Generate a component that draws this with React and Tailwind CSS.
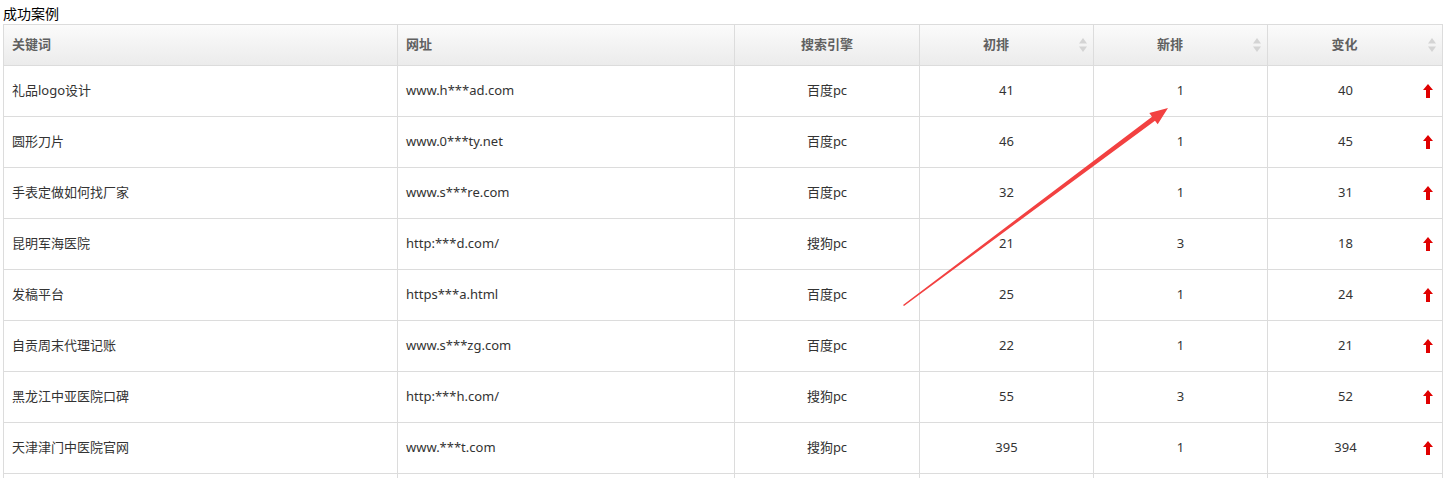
const rows = [
    { kw: "礼品logo设计", url: "www.h***ad.com", engine: "百度pc", first: 41, now: 1, diff: 40 },
    { kw: "圆形刀片", url: "www.0***ty.net", engine: "百度pc", first: 46, now: 1, diff: 45 },
    { kw: "手表定做如何找厂家", url: "www.s***re.com", engine: "百度pc", first: 32, now: 1, diff: 31 },
    { kw: "昆明军海医院", url: "http:***d.com/", engine: "搜狗pc", first: 21, now: 3, diff: 18 },
    { kw: "发稿平台", url: "https***a.html", engine: "百度pc", first: 25, now: 1, diff: 24 },
    { kw: "自贡周末代理记账", url: "www.s***zg.com", engine: "百度pc", first: 22, now: 1, diff: 21 },
    { kw: "黑龙江中亚医院口碑", url: "http:***h.com/", engine: "搜狗pc", first: 55, now: 3, diff: 52 },
    { kw: "天津津门中医院官网", url: "www.***t.com", engine: "搜狗pc", first: 395, now: 1, diff: 394 },
];

const SortIcon = () => (
    <svg width="8" height="14" viewBox="0 0 8 14" className="absolute right-[6px] top-1/2 -translate-y-1/2">
        <path d="M4 0 L8 5.5 L0 5.5 Z" fill="#d4d4d4" />
        <path d="M4 14 L8 8.5 L0 8.5 Z" fill="#d4d4d4" />
    </svg>
);

const UpArrow = () => (
    <svg width="10" height="14" viewBox="0 0 10 14" className="shrink-0">
        <path d="M5 0 L10 6 L7 6 L7 14 L3 14 L3 6 L0 6 Z" fill="#e00000" />
    </svg>
);

const SortHead = ({ label }) => (
    <th className="relative border border-[#dcdcdc] font-semibold text-center pr-[21px]">
        {label}
        <SortIcon />
    </th>
);

export default function App() {
    return (
        <div className="relative bg-white px-[3px] text-[13px] text-[#333]" style={{ fontFamily: '"Noto Sans", "Noto Sans CJK SC", sans-serif' }}>
            <div className="h-[24px] pt-[5px] text-[14px] leading-[18px] text-black">成功案例</div>
            <table className="border-collapse table-fixed w-[1439px]">
                <colgroup>
                    <col className="w-[394px]" />
                    <col className="w-[337px]" />
                    <col className="w-[185px]" />
                    <col className="w-[174px]" />
                    <col className="w-[174px]" />
                    <col className="w-[175px]" />
                </colgroup>
                <thead>
                    <tr className="h-[41px] bg-gradient-to-b from-[#fbfbfb] to-[#ebebeb] text-[#606060]">
                        <th className="border border-[#dcdcdc] font-semibold text-left pl-[8px]">关键词</th>
                        <th className="border border-[#dcdcdc] font-semibold text-left pl-[8px]">网址</th>
                        <th className="border border-[#dcdcdc] font-semibold text-center">搜索引擎</th>
                        <SortHead label="初排" />
                        <SortHead label="新排" />
                        <SortHead label="变化" />
                    </tr>
                </thead>
                <tbody>
                    {rows.map((r) => (
                        <tr key={r.kw} className="h-[51px]">
                            <td className="border border-[#dcdcdc] pl-[8px]">{r.kw}</td>
                            <td className="border border-[#dcdcdc] pl-[8px]">{r.url}</td>
                            <td className="border border-[#dcdcdc] text-center">{r.engine}</td>
                            <td className="border border-[#dcdcdc] text-center">{r.first}</td>
                            <td className="border border-[#dcdcdc] text-center">{r.now}</td>
                            <td className="border border-[#dcdcdc] p-0">
                                <div className="flex items-center pr-[9px]">
                                    <span className="flex-1 text-center">{r.diff}</span>
                                    <UpArrow />
                                </div>
                            </td>
                        </tr>
                    ))}
                    <tr className="h-[51px]">
                        <td className="border border-[#dcdcdc]"></td>
                        <td className="border border-[#dcdcdc]"></td>
                        <td className="border border-[#dcdcdc]"></td>
                        <td className="border border-[#dcdcdc]"></td>
                        <td className="border border-[#dcdcdc]"></td>
                        <td className="border border-[#dcdcdc]"></td>
                    </tr>
                </tbody>
            </table>
            <svg className="absolute left-0 top-0 pointer-events-none" width="1447" height="478">
                <polygon
                    points="903,305 1152,116.7 1149.3,113.1 1168,108 1157.7,124.3 1155,120.7 904,306"
                    fill="#f24141"
                />
            </svg>
        </div>
    );
}
